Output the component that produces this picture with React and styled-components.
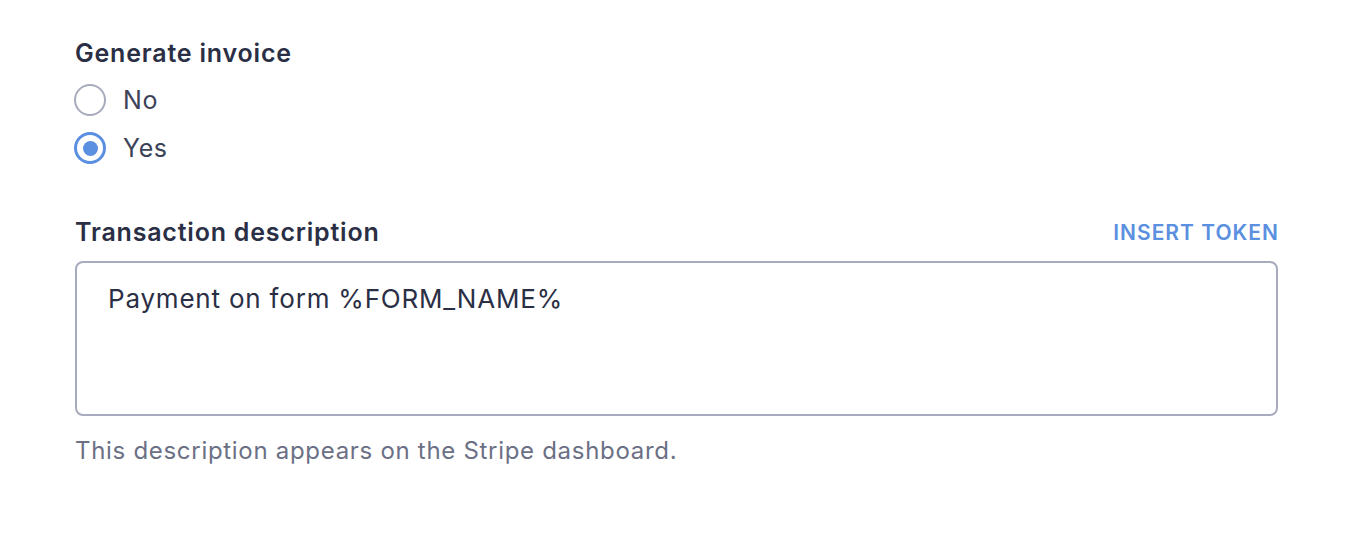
import React, { useState } from "react";
import styled, { createGlobalStyle } from "styled-components";

const GlobalStyle = createGlobalStyle`
  * { box-sizing: border-box; }
  body {
    margin: 0;
    background: #fff;
    font-family: Inter, "Noto Sans", sans-serif;
    -webkit-font-smoothing: antialiased;
  }
`;

const Page = styled.div`
  padding: 36px 72px 0 75px;
  width: 1350px;
`;

const Field = styled.div`
  display: flex;
  flex-direction: column;
  margin-bottom: ${(p) => p.$gap || 0}px;
`;

const LabelRow = styled.div`
  display: flex;
  justify-content: space-between;
  align-items: center;
`;

const Label = styled.div`
  font-size: 25px;
  font-weight: 600;
  letter-spacing: 0.8px;
  color: #2a2f45;
  line-height: 34px;
`;

const TokenButton = styled.button`
  background: none;
  border: none;
  padding: 0;
  margin-right: -1px;
  font-family: inherit;
  font-size: 21px;
  font-weight: 600;
  letter-spacing: 1px;
  color: #5b8fe0;
  cursor: pointer;
`;

const RadioList = styled.div`
  display: flex;
  flex-direction: column;
  margin-top: 6px;
`;

const RadioRow = styled.label`
  display: flex;
  align-items: center;
  gap: 17px;
  height: 48px;
  cursor: pointer;
  font-size: 25px;
  letter-spacing: 0.6px;
  color: #3c4257;
`;

const RadioCircle = styled.span`
  flex: none;
  width: 32px;
  height: 32px;
  margin-left: -1px;
  border-radius: 50%;
  border: ${(p) => (p.$checked ? "3px solid #5b8fe0" : "2px solid #a8abbd")};
  display: flex;
  align-items: center;
  justify-content: center;
  &::after {
    content: "";
    width: 15px;
    height: 15px;
    border-radius: 50%;
    background: #5b8fe0;
    display: ${(p) => (p.$checked ? "block" : "none")};
  }
`;

const TextBox = styled.textarea`
  display: block;
  margin-top: 12px;
  width: 100%;
  height: 155px;
  border: 2px solid #a8abbd;
  border-radius: 8px;
  padding: 19px 31px;
  font-family: inherit;
  font-size: 26px;
  letter-spacing: 0.8px;
  line-height: 34px;
  color: #2a2f45;
  resize: none;
  outline: none;
`;

const Help = styled.div`
  margin-top: 20px;
  font-size: 24px;
  line-height: 30px;
  letter-spacing: 0.7px;
  color: #6b7085;
`;

export default function App() {
  const [invoice, setInvoice] = useState("yes");
  return (
    <>
      <GlobalStyle />
      <Page>
        <Field $gap={43}>
          <Label>Generate invoice</Label>
          <RadioList>
            {["No", "Yes"].map((opt) => (
              <RadioRow key={opt} onClick={() => setInvoice(opt.toLowerCase())}>
                <RadioCircle $checked={invoice === opt.toLowerCase()} />
                {opt}
              </RadioRow>
            ))}
          </RadioList>
        </Field>
        <Field>
          <LabelRow>
            <Label>Transaction description</Label>
            <TokenButton type="button">INSERT TOKEN</TokenButton>
          </LabelRow>
          <TextBox defaultValue="Payment on form %FORM_NAME%" />
          <Help>This description appears on the Stripe dashboard.</Help>
        </Field>
      </Page>
    </>
  );
}
